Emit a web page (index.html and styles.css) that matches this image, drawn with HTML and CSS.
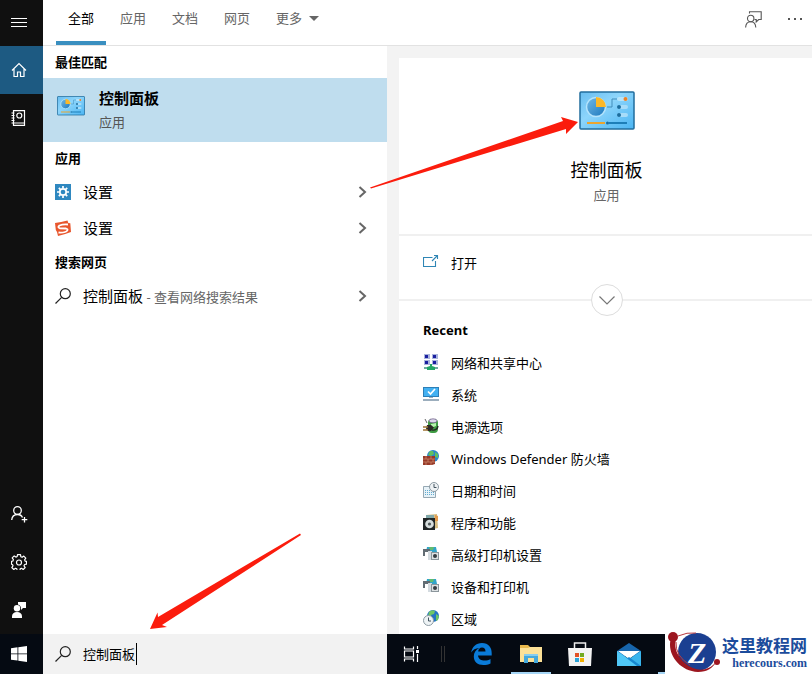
FILE: index.html
```html
<!DOCTYPE html>
<html lang="zh-CN">
<head>
    <meta charset="UTF-8">
    <meta name="viewport" content="width=device-width, initial-scale=1.0">
    <title>控制面板 - 搜索</title>
    <link rel="stylesheet" href="styles.css">
</head>
<body>

<div class="search-window">

    <!-- 左侧导航 -->
    <nav class="rail">
        <button class="rail-btn rail-menu" type="button" aria-label="菜单">
            <svg width="16" height="16" viewBox="0 0 16 16" stroke="#fff" shape-rendering="crispEdges"><path d="M0 3.500h16M0 7.500h16M0 11.500h16"/></svg>
        </button>
        <button class="rail-btn active" type="button" aria-label="主页">
            <svg width="16" height="16" viewBox="0 0 16 16" fill="none" stroke="#fff" stroke-width="1.200"><path d="M1 8.500L8 1.500l7 7M3 7v7.500h3.500V10h3v4.500H13V7"/></svg>
        </button>
        <button class="rail-btn" type="button" aria-label="笔记本">
            <svg width="16" height="16" viewBox="0 0 16 16" fill="none" stroke="#fff" stroke-width="1.200"><path d="M2.500.6h11v14.800h-11zM2.500 13h11M.5 3h3M.5 5.500h3M.5 8h3M.5 10.500h3M.5 13h3"/><circle cx="8.300" cy="5.500" r="2.500"/></svg>
        </button>
        <span class="rail-space"></span>
        <button class="rail-btn" type="button" aria-label="登录">
            <svg width="17" height="17" viewBox="0 0 17 17" fill="none" stroke="#fff" stroke-width="1.300"><circle cx="6.500" cy="4.500" r="3.800"/><path d="M.7 14c.3-3.500 2.500-5.500 5.800-5.500 2.600 0 4.300 1.200 5 3M13.500 11v5.500M10.700 13.700h5.600"/></svg>
        </button>
        <button class="rail-btn" type="button" aria-label="设置">
            <svg width="16" height="16" viewBox="0 0 16 16" fill="none" stroke="#fff" stroke-width="1.200" stroke-linejoin="round"><path d="M6.500.7h3l.3 2 1.300.6 1.700-1.200 2 2-1.200 1.700.5 1.300 1.400.3v2.800l-1.900.3-.6 1.300 1.200 1.700-2 2-1.700-1.200-1.300.6-.3 1.800h-2.800l-.3-1.900-1.300-.5-1.700 1.200-2-2L2 11.800l-.5-1.300-1-.3V7.300l1.400-.3.5-1.400-1.200-1.700 2-2 1.700 1.200 1.300-.6z"/><circle cx="8" cy="8.500" r="2.500"/></svg>
        </button>
        <button class="rail-btn" type="button" aria-label="反馈">
            <svg width="16" height="16" viewBox="0 0 16 16" fill="#fff"><path d="M7 0h8v6h-3l-2 2V6C9.500 3.500 8.500 3 7 2.500z"/><circle cx="6" cy="6.300" r="3.200"/><path d="M1 16v-1.500C1 11.500 3 10 6 10s5 1.500 5 4.500V16z"/></svg>
        </button>
    </nav>

    <div class="content">
        <header class="tabs">
            <button class="tab active" type="button">全部</button>
            <button class="tab" type="button">应用</button>
            <button class="tab" type="button">文档</button>
            <button class="tab" type="button">网页</button>
            <button class="tab" type="button">更多<svg class="tab-arrow" width="10" height="5" viewBox="0 0 10 5"><path d="M0 0h10L5 5z" fill="#666"/></svg></button>
            <div class="tab-tools">
                <button class="tool-btn" type="button" aria-label="反馈">
                    <svg width="17" height="17" viewBox="0 0 17 17" fill="none" stroke="#555" stroke-width="1.100"><path d="M4.500 2.500V.8h11.700v7.700h-2.500l-2.500 2.500V8.500H9.500"/><circle cx="5.700" cy="7.500" r="3.200"/><path d="M.6 16.500c.2-3.700 2.200-5.800 5.100-5.800s4.900 2.100 5.100 5.800"/></svg>
                </button>
                <button class="tool-btn" type="button" aria-label="更多选项">
                    <svg width="16" height="4" viewBox="0 0 16 4" fill="#555"><path d="M1 1h2v2H1zM7 1h2v2H7zM13 1h2v2h-2z"/></svg>
                </button>
            </div>
        </header>

        <div class="columns">
            <!-- 搜索结果 -->
            <section class="results">
                <h2 class="group-title">最佳匹配</h2>
                <a class="best-match" href="#">
                    <svg width="28" height="20" viewBox="0 0 56 40"><use href="#control-panel"/></svg>
                    <span class="best-text">
                        <strong class="best-name">控制面板</strong>
                        <span class="best-kind">应用</span>
                    </span>
                </a>

                <h2 class="group-title">应用</h2>
                <a class="result" href="#">
                    <svg width="16" height="16" viewBox="0 0 16 16"><path fill="#2f88c0" d="M0 0h16v16H0z"/><g fill="none" stroke="#fff"><circle cx="8" cy="8" r="3.200" stroke-width="1.700"/><path stroke-width="1.700" d="M8 2v2.200M8 11.800V14M2 8h2.200M11.800 8H14M3.800 3.800l1.500 1.500M10.700 10.700l1.500 1.500M12.200 3.800l-1.500 1.500M5.300 10.700l-1.500 1.500"/></g></svg>
                    <span class="result-name">设置</span>
                    <svg class="chevron" width="9" height="12" viewBox="0 0 9 12"><use href="#chevron"/></svg>
                </a>
                <a class="result" href="#">
                    <svg width="16" height="16" viewBox="0 0 16 16"><path fill="#e8562d" d="M0 3Q6 2 12.500.5L13.300 3l2 .3L16 12q-5 2-13 4L2 12 .8 10z"/><path d="M13 4.500Q8 4 4.500 5.500 2 7.500 5 8.300l6 .2c3 .8 1 3-1 3.500q-3 1-6.500.5" fill="none" stroke="#fff" stroke-width="1.800"/></svg>
                    <span class="result-name">设置</span>
                    <svg class="chevron" width="9" height="12" viewBox="0 0 9 12"><use href="#chevron"/></svg>
                </a>

                <h2 class="group-title">搜索网页</h2>
                <a class="result" href="#">
                    <svg width="16" height="16" viewBox="0 0 16 16"><use href="#magnifier"/></svg>
                    <span class="result-name">控制面板<span class="result-hint"> - 查看网络搜索结果</span></span>
                    <svg class="chevron" width="9" height="12" viewBox="0 0 9 12"><use href="#chevron"/></svg>
                </a>
            </section>

            <!-- 预览 -->
            <section class="preview">
                <div class="card">
                    <div class="card-head">
                        <svg width="56" height="40" viewBox="0 0 56 40"><use href="#control-panel"/></svg>
                        <h1 class="card-title">控制面板</h1>
                        <p class="card-kind">应用</p>
                    </div>

                    <div class="card-actions">
                        <a class="card-row" href="#">
                            <svg width="16" height="16" viewBox="0 0 16 16" fill="none" stroke="#2f86b5" stroke-width="1.100"><path d="M9.500 3.500H.5v9h12V7M9 7l5.500-5.500M11 1.500h3.500V5"/></svg>
                            <span>打开</span>
                        </a>
                        <button class="expand" type="button" aria-label="展开">
                            <svg width="16" height="9" viewBox="0 0 16 9" fill="none" stroke="#777" stroke-width="1.200"><path d="M.5.5L8 8 15.500.5"/></svg>
                        </button>
                    </div>

                    <div class="recent">
                        <h2 class="recent-title">Recent</h2>
                        <a class="card-row" href="#">
                            <svg width="16" height="16" viewBox="0 0 16 16"><path fill="#aab4dc" d="M1 0h6v5H1zM9 0h6v5H9zM1 6h6v5H1zM9 6h6v5H9z"/><path fill="#1b1fa0" d="M2 1h3v3H2zM10 1h3v3h-3zM2 7h3v3H2zM10 7h3v3h-3z"/><path fill="#6ba9a0" d="M1 13h14v2H1z"/><path fill="#23a565" d="M7 10h2v2l3 1v3H4v-3l3-1z"/></svg>
                            <span>网络和共享中心</span>
                        </a>
                        <a class="card-row" href="#">
                            <svg width="16" height="16" viewBox="0 0 16 16"><path fill="#2d7fb7" d="M0 1h16v10H0z"/><path fill="#43b1f2" d="M1 2h14v8H1z"/><path d="M5 5.500l2.500 2.500L12 3" fill="none" stroke="#fff" stroke-width="1.700"/><path fill="#9caebd" d="M6 11h4v1H6zM0 13h16v2H0z"/></svg>
                            <span>系统</span>
                        </a>
                        <a class="card-row" href="#">
                            <svg width="16" height="16" viewBox="0 0 16 16"><rect x="5" y="1" width="10" height="14" rx="4" fill="#3e9b43"/><ellipse cx="10" cy="2.800" rx="4" ry="2" fill="#ddd6ed" stroke="#665781" stroke-width=".7"/><path d="M8 6l5-1v3l-5 2z" fill="#b5f3ad"/><path d="M2 1l2 4" stroke="#666"/><path d="M4 7h4l3 2.500L8 13H5L3 11z" fill="#2c2927"/><path d="M0 9h5M0 12h5" stroke="#9d7533" stroke-width="1.500"/><path d="M9 12q5 1 6-4" fill="none" stroke="#252b24" stroke-width="1.400"/></svg>
                            <span>电源选项</span>
                        </a>
                        <a class="card-row" href="#">
                            <svg width="16" height="16" viewBox="0 0 16 16"><circle cx="10" cy="6" r="6" fill="#2b86ca"/><path d="M7 1l3 0 1 3-3 2-3-1zM12 2l3 2v4l-3-1z" fill="#60bf62"/><path fill="#963a29" d="M0 6h12v8l-3 1H0z"/><path d="M0 9h12M0 12h12M3 6v3M8 6v3M5 9v3M10 9v3M3 12v3M8 12v3" stroke="#d18e71" stroke-width=".7"/></svg>
                            <span>Windows Defender 防火墙</span>
                        </a>
                        <a class="card-row" href="#">
                            <svg width="16" height="16" viewBox="0 0 16 16"><path d="M.5 4.500h12v11H.5z" fill="#e7f2f8" stroke="#96a8b3"/><path d="M2 8.500h9M2 10.500h9M2 12.500h9" stroke="#61abcf" stroke-dasharray="1 1"/><circle cx="11" cy="5" r="4.500" fill="#eef2f4" stroke="#8c9aa3"/><path d="M11 2v3.500h2.500" fill="none" stroke="#43535f"/></svg>
                            <span>日期和时间</span>
                        </a>
                        <a class="card-row" href="#">
                            <svg width="16" height="16" viewBox="0 0 16 16"><path d="M3 1l11-1 1 14-5 1z" fill="#d8bd82"/><path d="M3 1h8v7H3z" fill="#80a8aa"/><path d="M12 1l3 1v5h-3z" fill="#e39b4e"/><path d="M0 4h12v12H0z" fill="#202526"/><circle cx="6.500" cy="10" r="4.300" fill="#d6dddd"/><circle cx="6.500" cy="10" r="1.600" fill="#4f5758"/></svg>
                            <span>程序和功能</span>
                        </a>
                        <a class="card-row" href="#">
                            <svg width="16" height="16" viewBox="0 0 16 16"><use href="#printer"/></svg>
                            <span>高级打印机设置</span>
                        </a>
                        <a class="card-row" href="#">
                            <svg width="16" height="16" viewBox="0 0 16 16"><use href="#printer"/></svg>
                            <span>设备和打印机</span>
                        </a>
                        <a class="card-row" href="#">
                            <svg width="16" height="16" viewBox="0 0 16 16"><circle cx="10" cy="6" r="6" fill="#2574c5"/><path d="M6 2q3-3 6-1l-1 3-3 1 1 3-4-2zM13 4l3 2-1 4-2 1z" fill="#6fc666"/><circle cx="5.500" cy="10.500" r="5" fill="#eef3f5" stroke="#8c9aa3"/><path d="M5.500 7.500V11H8" fill="none" stroke="#43535f"/></svg>
                            <span>区域</span>
                        </a>
                    </div>
                </div>
            </section>
        </div>
    </div>
</div>

<!-- 任务栏 -->
<footer class="taskbar">
    <button class="start" type="button" aria-label="开始">
        <svg width="16" height="16" viewBox="0 0 16 16" fill="#fff"><path d="M0 2.200L6.500 1.300v6.200H0zM7.300 1.200L16 0v7.500H7.300zM0 8.300h6.500v6.200L0 13.700zM7.300 8.300H16V16l-8.700-1.300z"/></svg>
    </button>
    <label class="search-box">
        <svg width="16" height="16" viewBox="0 0 16 16" role="img" aria-label="搜索"><use href="#magnifier"/></svg>
        <input class="search-input" type="text" value="控制面板">
        <span class="caret"></span>
    </label>
    <div class="apps">
        <button class="app" type="button" aria-label="任务视图">
            <svg width="17" height="16" viewBox="0 0 17 16" fill="none" stroke="#fff" stroke-width="1.200"><path d="M1.500.5V3h9V.5M1.500 5h9v6h-9zM1.500 15.500V13h9v2.500M14.500 0v3M14.500 8v8"/><path d="M13 4h3v3h-3z" fill="#fff" stroke="none"/></svg>
        </button>
        <span class="apps-divider"></span>
        <button class="app" type="button" aria-label="Edge">
            <svg width="21" height="22" viewBox="0 0 21 22"><path fill="#0a7bd8" d="M.2 9.500C1 4 5 0 11 0c6.500 0 9.700 4.500 9.700 10v2.500H7c.3 3.700 3.500 5 6.500 5 2.400 0 4.400-.6 6-1.600v4.500C17.500 21.500 15 22 12.300 22 6.500 22 2.800 18.500 2.800 13.500c0-3.700 2-6.800 5.500-8.400C4.500 5.200 1.800 7 .2 9.500zM7.200 8.500h7.300c0-2.500-1.300-3.900-3.500-3.900S7.400 6.300 7.200 8.500z"/></svg>
        </button>
        <button class="app running" type="button" aria-label="文件资源管理器">
            <svg width="22" height="20" viewBox="0 0 22 20"><path fill="#e9b94c" d="M0 1h8l2 2h11v6H0z"/><path fill="#fce197" d="M0 4h8l2-1h12v15H0z"/><path fill="#45a9dc" d="M4 10h14v9h-4v-5H8v5H4z"/><path fill="#86cdf0" d="M4 10h14v2H4z"/></svg>
        </button>
        <button class="app" type="button" aria-label="应用商店">
            <svg width="24" height="25" viewBox="0 0 24 25"><path d="M6.500 7V1h11v6" fill="none" stroke="#eee" stroke-width="1.500"/><path fill="#f3f3f3" d="M0 6h24l-1 18H1z"/><path fill="#e25125" d="M7 11h4v4H7z"/><path fill="#72aa21" d="M12 11h4v4h-4z"/><path fill="#2ba3d8" d="M7 16h4v4H7z"/><path fill="#f3b000" d="M12 16h4v4h-4z"/></svg>
        </button>
        <button class="app" type="button" aria-label="邮件">
            <svg width="24" height="23" viewBox="0 0 24 23"><path fill="#1765ab" d="M0 8l12-8 12 8v5H0z"/><path fill="#fff" d="M1 8h22l-11 8z"/><path fill="#39b5ed" d="M0 8l12 8 12-8v15H0z"/><path fill="#1687d0" d="M0 23l12-9 12 9z"/><path fill="#50c8f7" d="M0 8l20 15H0z"/></svg>
        </button>
        <span class="app running"></span>
    </div>
</footer>

<!-- 标注箭头 -->
<svg class="arrow arrow-preview" width="210" height="72" viewBox="0 0 210 72" aria-hidden="true"><path fill="#fb1c0d" d="M0 70.500L193 4l-2-4 17 5-12 12v-5L1 71.500z"/></svg>
<svg class="arrow arrow-input" width="152" height="98" viewBox="0 0 152 98" aria-hidden="true"><path fill="#fb1c0d" d="M150 .5L8 84l-.5-4.500L0 96l17-2-5-2L151 2z"/></svg>

<!-- 水印 -->
<div class="watermark">
    <svg width="54" height="42" viewBox="0 0 54 42">
        <circle cx="30" cy="20" r="19" fill="#1b3f91"/>
        <path d="M5 4C-2 18 10 39 31 40c9 0 15-4 18-10-8 10-21 10-31 1C9 23 6 13 10 5z" fill="#9c1620"/>
        <circle cx="6" cy="5" r="5" fill="#9c1620"/>
        <path d="M11 4Q20 0 29 1M9 10Q8 24 23 33" fill="none" stroke="#b83a40"/>
        <circle cx="50" cy="30" r="3" fill="#9c1620"/>
        <text class="watermark-z" x="21" y="31">Z</text>
    </svg>
    <div class="watermark-text">
        <span class="watermark-name">这里教程网</span>
        <span class="watermark-site">herecours.com</span>
    </div>
</div>

<!-- 公用图标 -->
<svg class="symbols" aria-hidden="true">
    <defs>
        <linearGradient id="panel-fill" x1="0" y1="0" x2="1" y2="1">
            <stop offset="0" stop-color="#68bdf0"/>
            <stop offset=".4" stop-color="#8dd5fb"/>
            <stop offset="1" stop-color="#4bb5f3"/>
        </linearGradient>
        <linearGradient id="pie-fill" x1="0" y1="0" x2="1" y2="1">
            <stop offset="0" stop-color="#72b9e6"/>
            <stop offset="1" stop-color="#1b78bd"/>
        </linearGradient>
        <g id="control-panel">
            <rect x="1" y="1" width="54" height="37" rx="1" fill="url(#panel-fill)" stroke="#226d9d" stroke-width="1.500"/>
            <circle cx="17" cy="16" r="9.500" fill="url(#pie-fill)" stroke="#b5e4fc" stroke-width="1.500"/>
            <path d="M17 16V6a10 10 0 0 1 10 10z" fill="#fcb827"/>
            <path d="M28 16h5V8h5" fill="none" stroke="#418dbb"/>
            <rect x="38" y="6" width="11" height="4" rx="2" fill="#b5e4fc"/>
            <circle cx="46.500" cy="8" r="2" fill="#ec8128"/>
            <rect x="38" y="14" width="11" height="4" rx="2" fill="#a7dcf9"/>
            <circle cx="40" cy="16" r="2" fill="#1b6d9f"/>
            <rect x="38" y="22" width="11" height="4" rx="2" fill="#a7dcf9"/>
            <circle cx="40" cy="24" r="2" fill="#1b6d9f"/>
            <path d="M8 32h18" stroke="#eba52f" stroke-width="2"/>
            <path d="M30 32h18" stroke="#1d7eb8" stroke-width="2"/>
            <circle cx="28.500" cy="32" r="1.500" fill="#1b6d9f"/>
        </g>
        <path id="chevron" d="M1.500 1L7 6l-5.500 5" fill="none" stroke="#666" stroke-width="2"/>
        <g id="magnifier" fill="none" stroke="#222" stroke-width="1.200">
            <circle cx="10.300" cy="5.700" r="5"/>
            <path d="M6.700 9.300L.5 15.500"/>
        </g>
        <g id="printer">
            <path d="M4 1h9l1 5H3z" fill="#32a4c9"/>
            <path d="M6 1h5l-1 3H7z" fill="#62bb70"/>
            <path d="M0 3h7v8H5V6H2v4H0z" fill="#626c73"/>
            <path d="M5 5h4v9H5z" fill="#d4dbe0"/>
            <path d="M8 6h8v8H8z" fill="#8c969c"/>
            <path d="M9 7h6v6H9z" fill="#dde1e3"/>
            <circle cx="12" cy="10" r="2" fill="#363c42"/>
        </g>
    </defs>
</svg>

</body>
</html>
```

FILE: styles.css
```css
* {
    box-sizing: border-box;
}
body {
    display: flex;
    flex-direction: column;
    position: relative;
    height: 100vh;
    margin: 0;
    overflow: hidden;
    font-family: "Noto Sans", "Noto Sans CJK SC", sans-serif;
    font-size: 13px;
    line-height: 20px;
    color: #000;
    background-color: #fff;
}
h1, h2, p {
    margin: 0;
}
a {
    color: inherit;
    text-decoration: none;
}
button {
    padding: 0;
    border: 0;
    background: none;
    font: inherit;
    color: inherit;
}
svg {
    display: block;
    flex-shrink: 0;
}
.symbols {
    position: absolute;
    width: 0;
    height: 0;
}

.search-window {
    display: flex;
    flex: 1;
    min-height: 0;
}

/* 左侧导航 */
.rail {
    display: flex;
    flex-direction: column;
    width: 43px;
    background-color: #101010;
}
.rail-btn {
    display: flex;
    align-items: center;
    height: 48px;
    padding-left: 11px;
}
.rail-menu {
    height: 46px;
}
.rail-btn.active {
    background-color: #1d5a82;
}
.rail-space {
    flex: 1;
}

.content {
    display: flex;
    flex: 1;
    flex-direction: column;
    min-width: 0;
}

/* 顶部分类 */
.tabs {
    display: flex;
    gap: 2px;
    height: 46px;
    padding: 0 9px 0 13px;
    border-bottom: 1px solid #e2e2e2;
}
.tab {
    display: flex;
    align-items: center;
    padding: 0 12px 6px;
    border-bottom: 4px solid transparent;
    color: #666;
}
.tab.active {
    border-bottom-color: #3a8fc0;
    color: #000;
}
.tab-arrow {
    margin: 2px 0 0 7px;
}
.tab-tools {
    display: flex;
    gap: 25px;
    margin-left: auto;
    padding-bottom: 7px;
}

.columns {
    display: flex;
    flex: 1;
    min-height: 0;
}

/* 搜索结果 */
.results {
    width: 344px;
}
.group-title {
    padding: 6px 12px;
    font-size: 13px;
    line-height: 20px;
}
.best-match {
    display: flex;
    gap: 14px;
    height: 64px;
    padding: 8px 14px;
    background-color: #bfddee;
}
.best-match svg {
    margin-top: 10px;
}
.best-text {
    display: flex;
    flex-direction: column;
    gap: 2px;
}
.best-name {
    font-size: 15px;
    line-height: 24px;
}
.best-kind {
    color: #555;
}
.result {
    display: flex;
    align-items: center;
    gap: 12px;
    height: 36px;
    padding: 0 20px 0 12px;
}
.result-name {
    font-size: 15px;
}
.result-hint {
    font-size: 13px;
    color: #666;
}
.chevron {
    margin-left: auto;
}

/* 预览 */
.preview {
    flex: 1;
    min-width: 0;
    padding: 12px 0 0 12px;
    background-color: #f3f3f3;
}
.card {
    height: 100%;
    margin-right: -2px;
    background-color: #fff;
}
.card-head {
    display: flex;
    flex-direction: column;
    align-items: center;
    height: 178px;
    padding-top: 33px;
    border-bottom: 2px solid #f0f0f0;
}
.card-title {
    margin-top: 24px;
    font-size: 18px;
    font-weight: normal;
    line-height: 30px;
}
.card-kind {
    color: #666;
}
.card-actions {
    position: relative;
    padding: 11px 0 20px;
    border-bottom: 2px solid #f0f0f0;
}
.card-row {
    display: flex;
    align-items: center;
    gap: 12px;
    height: 32px;
    padding: 0 24px;
}
.card-row svg {
    margin-bottom: 2px;
}
/* 压在分隔线上的圆形按钮 */
.expand {
    display: flex;
    align-items: center;
    justify-content: center;
    position: absolute;
    bottom: -17px;
    left: calc(50% - 16px);
    width: 32px;
    height: 32px;
    border: 1px solid #ddd;
    border-radius: 50%;
    background-color: #fff;
}
.recent {
    padding-top: 19px;
}
.recent-title {
    padding: 0 24px 7px;
    font-size: 13px;
    line-height: 20px;
}

/* 任务栏 */
.taskbar {
    display: flex;
    height: 40px;
    background-color: #050a12;
}
.start {
    display: flex;
    align-items: center;
    width: 43px;
    padding-left: 11px;
}
.search-box {
    display: flex;
    align-items: center;
    width: 344px;
    padding-left: 12px;
    background-color: #f2f2f2;
}
.search-input {
    field-sizing: content;
    margin-left: 12px;
    padding: 0 1px 0 0;
    border: 0;
    outline: 0;
    background: none;
    font: inherit;
    color: #000;
}
.caret {
    width: 1px;
    height: 22px;
    background-color: #000;
}
.apps {
    display: flex;
    flex: 1;
    min-width: 0;
    overflow: hidden;
}
.app {
    display: flex;
    flex-shrink: 0;
    align-items: center;
    justify-content: center;
    width: 49px;
}
.app.running {
    background: linear-gradient(#a5d5f5, #a5d5f5) center bottom / 40px 2px no-repeat;
}
.apps-divider {
    flex-shrink: 0;
    width: 4px;
    height: 16px;
    margin: 12px 12px 12px 5px;
    border: solid #333;
    border-width: 0 1px;
}

/* 标注箭头 */
.arrow {
    position: absolute;
    pointer-events: none;
}
.arrow-preview {
    top: 117px;
    left: 370px;
}
.arrow-input {
    top: 533px;
    left: 150px;
}

/* 水印 */
.watermark {
    display: flex;
    align-items: flex-end;
    position: absolute;
    right: 0;
    bottom: 0;
    padding: 0 5px 0 2px;
    background: linear-gradient(#fff, #fff) left bottom / 100% 40px no-repeat;
}
.watermark-z {
    font-family: "Liberation Serif", serif;
    font-size: 30px;
    font-style: italic;
    font-weight: bold;
    fill: #fff;
}
.watermark-text {
    display: flex;
    flex-direction: column;
    align-items: flex-end;
    padding: 0 0 4px 1px;
    color: #1c4c9c;
    font-weight: bold;
}
.watermark-name {
    font-size: 17px;
    line-height: 20px;
}
.watermark-site {
    font-family: "Liberation Serif", serif;
    font-size: 12px;
    line-height: 14px;
}
```
